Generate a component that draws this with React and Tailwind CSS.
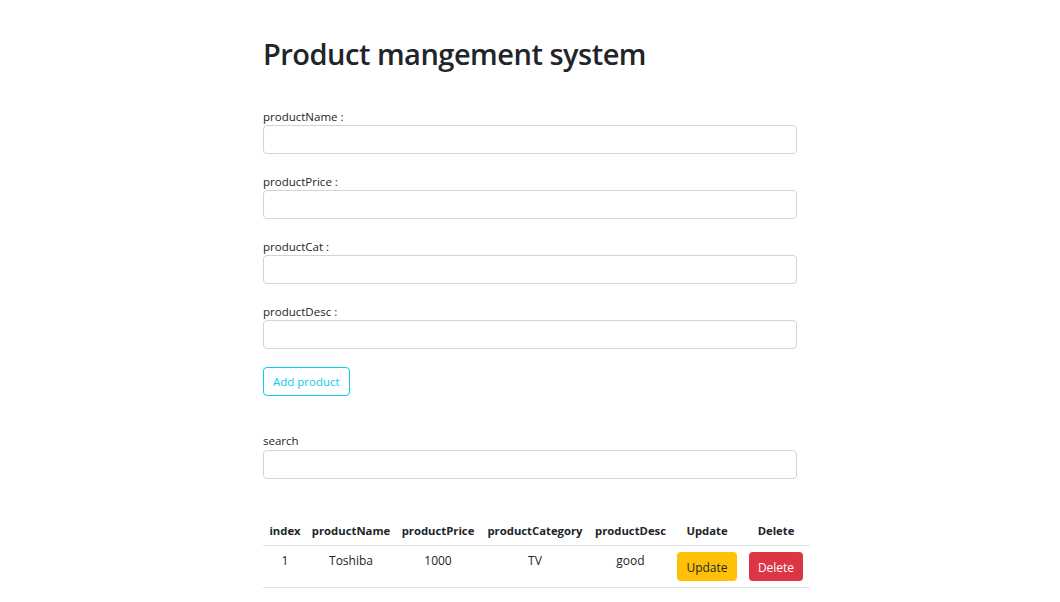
export default function App() {
  const fields = ["productName :", "productPrice :", "productCat :", "productDesc :"];
  const font = { fontFamily: '"Open Sans", "Noto Sans", sans-serif' };
  const headers = [
    ["index", "w-[44px]"],
    ["productName", "w-[88px]"],
    ["productPrice", "w-[86px]"],
    ["productCategory", "w-[108px]"],
    ["productDesc", "w-[83px]"],
    ["Update", "w-[70px]"],
    ["Delete", "w-[68px]"],
  ];
  return (
    <div className="min-h-[602px] w-full bg-white text-[#212529]" style={font}>
      <div className="ml-[263px] w-[534px] pt-[36px]">
        <h1 className="h-[36px] text-[29px] leading-[36px] font-semibold tracking-[-0.5px]">Product mangement system</h1>
        <div className="mt-[36px] flex flex-col">
          {fields.map((f) => (
            <div key={f} className="mb-[19px] flex flex-col">
              <label className="h-[17px] text-[11.5px] leading-[17px]">{f}</label>
              <input className="h-[29px] w-full rounded-[4px] border border-[#ced4da] bg-white px-2 text-[12px] outline-none" />
            </div>
          ))}
        </div>
        <button className="-mt-px h-[29px] rounded-[4px] border border-[#0dcaf0] px-[9px] pt-px text-[11.5px] text-[#0dcaf0]">Add product</button>
        <div className="mt-[36px] flex flex-col">
          <label className="h-[18px] text-[11.5px] leading-[17px]">search</label>
          <input className="h-[29px] w-full rounded-[4px] border border-[#ced4da] bg-white px-2 text-[12px] outline-none" />
        </div>
      </div>
      <table className="ml-[263px] mt-[36px] w-[547px] table-fixed border-collapse text-[12px] leading-[18px]">
        <thead>
          <tr className="border-b border-[#dee2e6]">
            {headers.map(([h, w]) => (
              <th key={h} className={"px-0 pt-[7px] pb-[5px] text-center align-top text-[11.3px] font-bold " + w}>{h}</th>
            ))}
          </tr>
        </thead>
        <tbody>
          <tr className="border-b border-[#dee2e6]">
            <td className="px-0 py-[6px] text-center align-top">1</td>
            <td className="px-0 py-[6px] text-center align-top">Toshiba</td>
            <td className="px-0 py-[6px] text-center align-top">1000</td>
            <td className="px-0 py-[6px] text-center align-top">TV</td>
            <td className="px-0 py-[6px] text-center align-top">good</td>
            <td className="px-0 py-[6px] text-center align-top">
              <button className="h-[29px] rounded-[4px] bg-[#ffc107] px-[9px] pt-[2px] text-[12px] text-[#212529]">Update</button>
            </td>
            <td className="px-0 py-[6px] text-center align-top">
              <button className="h-[29px] rounded-[4px] bg-[#dc3545] px-[9px] pt-[2px] text-[12px] text-white">Delete</button>
            </td>
          </tr>
        </tbody>
      </table>
    </div>
  );
}
